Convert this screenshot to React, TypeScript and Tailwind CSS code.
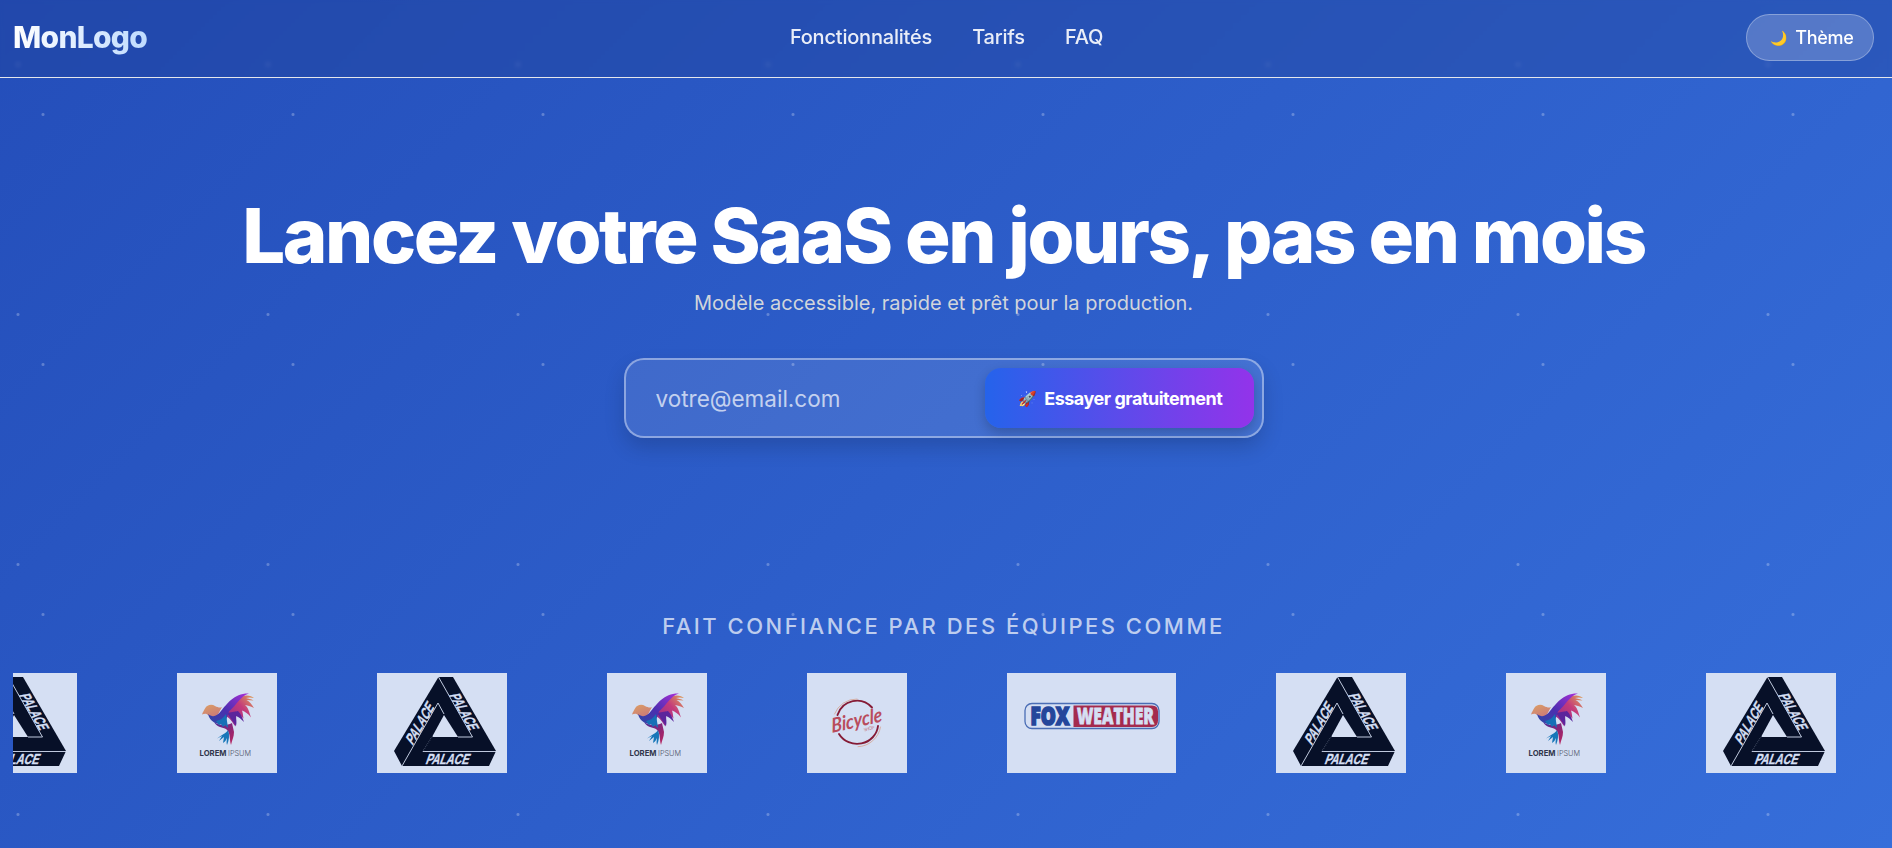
import React from "react";

function Palace() {
  return (
    <svg viewBox="0 0 130 100" className="h-[100px] w-[130px] shrink-0 bg-[#d5dff3]">
      <path d="M61.5 4H76L119 78l-7 15H25l-8-15Z" fill="#071028" />
      <path d="M67 42 55 64H81Z" fill="#d5dff3" />
      <path d="M61.5 4 95.500 64H81M25 93 61 30 67 41M55 64 46 78.500H119" fill="none" stroke="#d5dff3" strokeWidth="0.9" />
      <path d="M55.500 63.500 46.500 78" stroke="#071028" strokeWidth="1.400" />
      <g fill="#d5dff3" stroke="#d5dff3" strokeWidth="0.4" fontFamily="Liberation Sans Narrow, Liberation Sans, sans-serif" fontWeight="700" fontSize="14.500">
        <text transform="translate(48 91) skewX(-20)" textLength="43" lengthAdjust="spacingAndGlyphs">PALACE</text>
        <text transform="translate(35.500 73) rotate(-60) skewX(-20)" textLength="44" lengthAdjust="spacingAndGlyphs">PALACE</text>
        <text transform="translate(72 22) rotate(60) skewX(-20)" textLength="41" lengthAdjust="spacingAndGlyphs">PALACE</text>
      </g>
    </svg>
  );
}

function Lorem() {
  return (
    <svg viewBox="0 0 100 100" className="size-[100px] shrink-0 bg-[#d5dff3]">
      <defs>
        <linearGradient id="wing" x1="0" y1="1" x2="1" y2="0">
          <stop offset="0" stopColor="#2b4aa5" />
          <stop offset="0.45" stopColor="#4b2fb0" />
          <stop offset="1" stopColor="#a92fd6" />
        </linearGradient>
        <linearGradient id="head" x1="0" y1="0" x2="0.6" y2="1">
          <stop offset="0" stopColor="#dda064" />
          <stop offset="1" stopColor="#c9787a" />
        </linearGradient>
        <linearGradient id="feather" x1="0" y1="1" x2="1" y2="0">
          <stop offset="0" stopColor="#8b2690" />
          <stop offset="0.6" stopColor="#c43b7b" />
          <stop offset="1" stopColor="#dfa455" />
        </linearGradient>
        <linearGradient id="tail" x1="0" y1="0" x2="1" y2="1">
          <stop offset="0" stopColor="#4a2a98" />
          <stop offset="1" stopColor="#c0245b" />
        </linearGradient>
      </defs>
      <path d="M25 41.500c1-3 2-4 3-6 2-4 7-4.500 10-2.500 3 1.500 5 2 7 1l-6 11-8-3c-2-2-4-1-6-.5Z" fill="url(#head)" />
      <path d="M37 49c6 4 12 4 18 1l2 9c0 5-2 8-3 13-2-7 0-12-5-16-5-2-9-2-12-7Z" fill="url(#tail)" />
      <path d="M49 40C57 27 63 23 70 22.500c3 0 5 1 7 2.500-4-1-6-.5-8 0 3 1 5 1 7.500 2.500l-7-.5c3 1.500 5 4 7.500 8-4-2-6-2.500-9-3 3 2.500 4 6 6 12.500-3-4-6-6-9-7 1 3 1 5 1.500 8-3-3-5-5-7-7l-1 15C55 49 54 46 49 43Z" fill="url(#feather)" />
      <path d="M50 40 59 53c1-4 0-7 0-10 3 1 5 3 8 6-2-5-3-8-6-11Z" fill="#5c249c" />
      <path d="M31 41c5 4 9 2 13-3C50 31 57 20 72 20.500c-9 3-12 11-20 18L49 47l-1 5c-9-1-15-3-17-11Z" fill="url(#wing)" />
      <path d="M39 48c5-1 7-3 10-7l2 14-3-3-2 2-2-3-2 1Z" fill="#1670b6" />
      <path d="M51 57c2 5 1 10-1 15-1-3 0-5 0-7-1 2-2 4-4 5l1-6-5 4 3-5-5 2.500c5-4 9-5 11-8.500Z" fill="#1676b8" />
      <text x="22.500" y="82.500" fontFamily="Inter, sans-serif" fontWeight="700" fontSize="7.500" fill="#30354b" textLength="27" lengthAdjust="spacingAndGlyphs">LOREM</text>
      <text x="51" y="82.500" fontFamily="Inter, sans-serif" fontWeight="300" fontSize="7.500" fill="#4d5469" textLength="23" lengthAdjust="spacingAndGlyphs">IPSUM</text>
    </svg>
  );
}

function Bicycle() {
  return (
    <svg viewBox="0 0 100 100" className="size-[100px] shrink-0 bg-[#d5dff3]">
      <g fill="none" strokeLinecap="round">
        <path d="M30.500 42A20.500 21 0 0 1 65 34.500M71 53A21 20 0 0 1 32 61" stroke="#851b35" strokeWidth="1.900" />
        <path d="M27.500 41A23.500 23.500 0 0 1 50 26M73.500 54A23.500 23.500 0 0 1 51 73.700" stroke="#d6a99b" strokeWidth="0.900" />
      </g>
      <text
        transform="translate(25 60) rotate(-13) skewX(-8)"
        fontFamily="Lato, sans-serif"
        fontWeight="700"
        fontStyle="italic"
        fontSize="20"
        fill="#b94c5c"
        textLength="52"
        lengthAdjust="spacingAndGlyphs"
      >
        Bicycle
      </text>
      <text transform="translate(57 58.500) rotate(-14)" fontFamily="Inter, sans-serif" fontSize="4.500" fill="#c67d87" textLength="11">SHOP</text>
    </svg>
  );
}

function Fox() {
  return (
    <svg viewBox="0 0 169 100" className="h-[100px] w-[169px] shrink-0 bg-[#d5dff3]">
      <rect x="18" y="30.500" width="134" height="25" rx="7" fill="#d5dff3" stroke="#4a6db5" strokeWidth="1.300" />
      <path d="M66.500 32.500H145q6 0 6 6v9q0 6.500-6 6.500H66.500Z" fill="#a42b4d" />
      <text x="23.500" y="51.500" fontFamily="Open Sans, sans-serif" fontWeight="800" fontSize="24" fill="#24469b" stroke="#24469b" strokeWidth="1.700" textLength="39" lengthAdjust="spacingAndGlyphs">FOX</text>
      <text x="70" y="51" fontFamily="Open Sans, sans-serif" fontWeight="800" fontSize="22.500" fill="#d5dff3" stroke="#d5dff3" strokeWidth="0.800" textLength="77" lengthAdjust="spacingAndGlyphs">WEATHER</text>
    </svg>
  );
}

const marks = [Palace, Lorem, Palace, Lorem, Bicycle, Fox, Palace, Lorem, Palace];

export default function App() {
  return (
    <div className="h-[848px] overflow-hidden bg-[radial-gradient(circle_at_43px_114.500px,rgba(255,255,255,0.26)_1px,transparent_2px),radial-gradient(circle_at_18px_64.500px,rgba(255,255,255,0.26)_1px,transparent_2px),linear-gradient(135deg,#244eba,#366eda)] bg-[length:250px_250px,250px_250px,100%_100%] font-['Inter',sans-serif] text-white">
      <header className="flex h-[78px] items-center justify-between border-b border-[#e5e7eb] bg-[#1e3a8a]/30 pr-[18px] pb-[3px] pl-[13px] backdrop-blur-[2px]">
        <a className="bg-linear-to-r from-white to-[#bfdbfe] bg-clip-text text-[30px] leading-9 font-extrabold tracking-[-0.75px] text-transparent">MonLogo</a>
        <nav className="flex gap-10 text-[20px] font-medium tracking-[-0.2px] text-white/90">
          <a>Fonctionnalités</a>
          <a>Tarifs</a>
          <a>FAQ</a>
        </nav>
        <button className="flex h-[47px] w-32 items-center justify-center gap-2 rounded-full border border-white/30 bg-white/20 pt-0.5 pl-1 text-lg font-medium tracking-[-0.25px]">
          <span className="text-sm">🌙</span>
          <span>Thème</span>
        </button>
      </header>
      <main className="flex flex-col items-center pr-[18px] pl-[13px]">
        <h1 className="mt-[117px] text-[76px] leading-[80px] font-extrabold tracking-[-2.4px] whitespace-nowrap">Lancez votre SaaS en jours, pas en mois</h1>
        <p className="mt-[14px] text-xl leading-7 text-[#d1d5db]">Modèle accessible, rapide et prêt pour la production.</p>
        <form className="mt-[41px] flex h-20 w-[640px] items-center rounded-[20px] border-2 border-white/40 bg-white/10 pr-2 pl-[30px] shadow-[0_10px_20px_rgba(0,0,0,0.15)]">
          <input placeholder="votre@email.com" className="min-w-0 flex-1 bg-transparent pt-0.5 text-[22.500px] outline-none placeholder:text-white/70" />
          <button className="flex h-[60px] w-[269px] shrink-0 items-center justify-center gap-2 rounded-2xl bg-linear-to-r/srgb from-[#2563eb] to-[#9333ea] pt-0.5 pl-0.5 text-lg font-bold tracking-[-0.48px] whitespace-nowrap shadow-[0_5px_12px_rgba(0,0,0,0.2)]">
            <span className="text-[15px]">🚀</span>
            <span>Essayer gratuitement</span>
          </button>
        </form>
        <h2 className="mt-[172px] text-[22px] leading-8 font-medium tracking-[2.500px] text-white/70">FAIT CONFIANCE PAR DES ÉQUIPES COMME</h2>
        <div className="mt-[31px] w-full overflow-hidden">
          <div className="-ml-[66px] flex gap-[100px]">
            {marks.map((Mark, i) => (
              <Mark key={i} />
            ))}
          </div>
        </div>
      </main>
    </div>
  );
}
